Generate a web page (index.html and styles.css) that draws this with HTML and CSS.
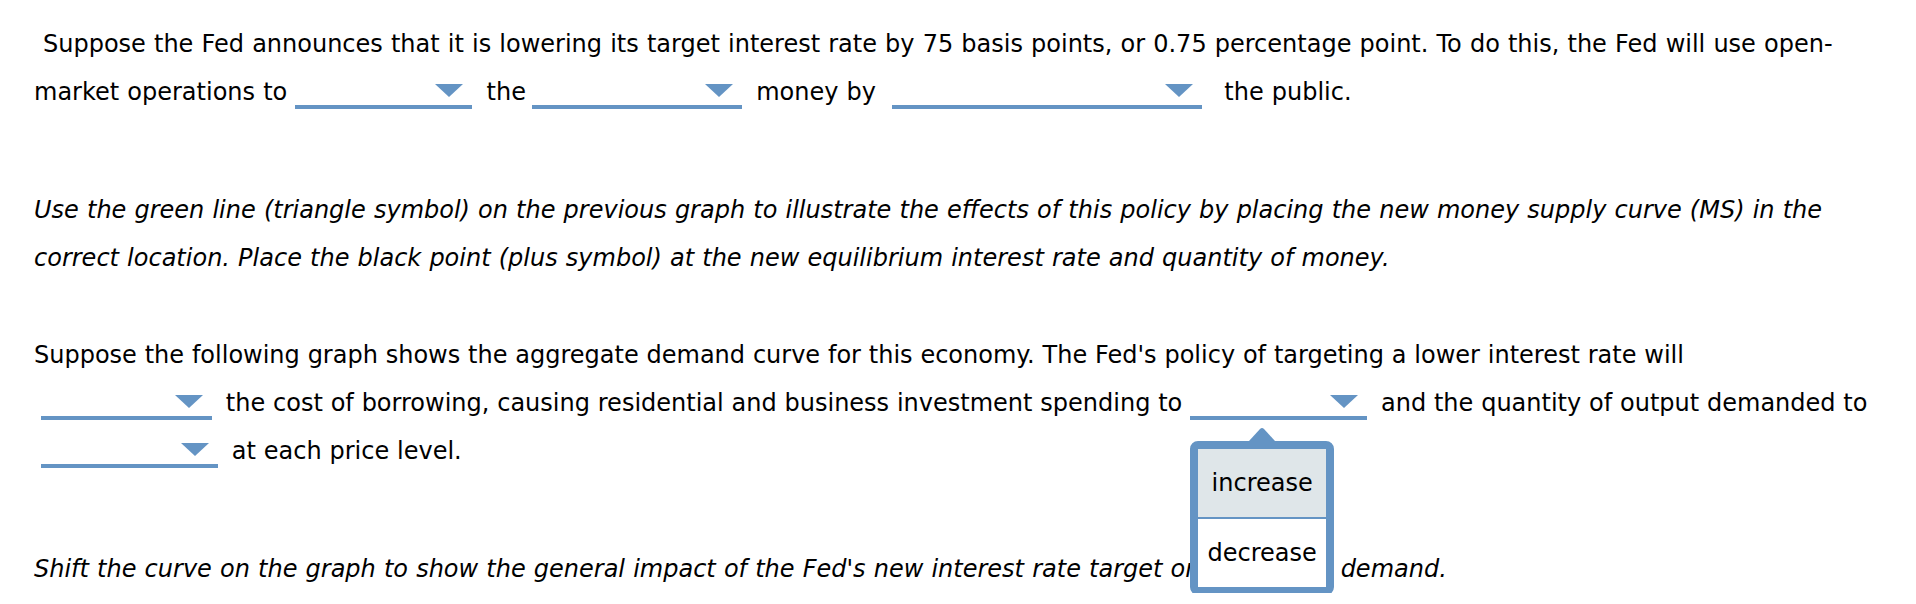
FILE: index.html
```html
<!DOCTYPE html>
<html>
<head>
<meta charset="utf-8">
<link rel="stylesheet" href="styles.css">
</head>
<body>
<div class="content">
  <p class="para p1"><span class="indent">Suppose the Fed announces that it is lowering its target interest rate by 75 basis points, or 0.75 percentage point. To do this, the Fed will use open-</span><br>market operations to <span class="dd w177"><svg class="arrow" viewBox="0 0 28 13"><path d="M0 0H28L14 13Z"/></svg></span> the <span class="dd w210"><svg class="arrow" viewBox="0 0 28 13"><path d="M0 0H28L14 13Z"/></svg></span> money by <span class="dd w310 wide"><svg class="arrow" viewBox="0 0 28 13"><path d="M0 0H28L14 13Z"/></svg></span> the public.</p>

  <p class="para p2 italic">Use the green line (triangle symbol) on the previous graph to illustrate the effects of this policy by placing the new money supply curve (MS) in the<br>correct location. Place the black point (plus symbol) at the new equilibrium interest rate and quantity of money.</p>

  <p class="para p3">Suppose the following graph shows the aggregate demand curve for this economy. The Fed's policy of targeting a lower interest rate will<br><span class="dd w171 lead"><svg class="arrow" viewBox="0 0 28 13"><path d="M0 0H28L14 13Z"/></svg></span> the cost of borrowing, causing residential and business investment spending to <span class="dd w177 open"><svg class="arrow" viewBox="0 0 28 13"><path d="M0 0H28L14 13Z"/></svg><span class="popup"><svg class="caret" viewBox="0 0 26 14"><path d="M0 14L11 2Q13 0 15 2L26 14Z"/></svg><span class="menu"><span class="opt sel">increase</span><span class="opt">decrease</span></span></span></span> and the quantity of output demanded to<br><span class="dd w177 lead"><svg class="arrow" viewBox="0 0 28 13"><path d="M0 0H28L14 13Z"/></svg></span> at each price level.</p>

  <p class="para p4 italic">Shift the curve on the graph to show the general impact of the Fed's new interest rate target on aggregate demand.</p>
</div>
</body>
</html>
```

FILE: styles.css
```css
html, body {
  margin: 0;
  padding: 0;
  background: #ffffff;
}

.content {
  padding: 20px 0 0 34px;
  font-family: "DejaVu Sans", Verdana, sans-serif;
  font-size: 24px;
  line-height: 48px;
  word-spacing: 0.5px;
  color: #000000;
  white-space: nowrap;
}

.para {
  margin: 0;
}

.p2 {
  margin-top: 70px;
}

.p3 {
  margin-top: 49px;
  word-spacing: 0.2px;
}

.p4 {
  margin-top: 70px;
}

.indent {
  padding-left: 9px;
}

.italic {
  font-style: italic;
}

.dd {
  display: inline-block;
  position: relative;
  vertical-align: -9px;
  height: 21px;
  border-bottom: 4px solid #6494c4;
  box-sizing: content-box;
  padding-right: 9px;
  margin: 0 6px 0 0;
  line-height: 0;
}

.dd.lead {
  margin-left: 7px;
}

.dd.wide {
  margin-left: 8px;
  margin-right: 14px;
}

.w171 { width: 162px; }
.w177 { width: 168px; }
.w210 { width: 201px; margin-left: -2px; }
.w310 { width: 301px; }

.arrow {
  display: block;
  width: 28px;
  height: 13px;
  margin-left: auto;
  fill: #6494c4;
}

.popup {
  position: absolute;
  left: 0;
  top: 32px;
  width: 144px;
  z-index: 5;
  display: flex;
  flex-direction: column;
  align-items: center;
  word-spacing: 0;
}

.caret {
  display: block;
  width: 26px;
  height: 14px;
  fill: #6494c4;
}

.menu {
  display: flex;
  flex-direction: column;
  width: 100%;
  box-sizing: border-box;
  border: 8px solid #6494c4;
  border-radius: 8px;
  background: #ffffff;
}

.opt {
  display: block;
  height: 68px;
  line-height: 68px;
  text-align: center;
  font-size: 24px;
  font-style: normal;
  color: #000000;
  background: #ffffff;
}

.opt.sel {
  background: #dfe6e9;
  border-bottom: 2px solid #6494c4;
}
```
